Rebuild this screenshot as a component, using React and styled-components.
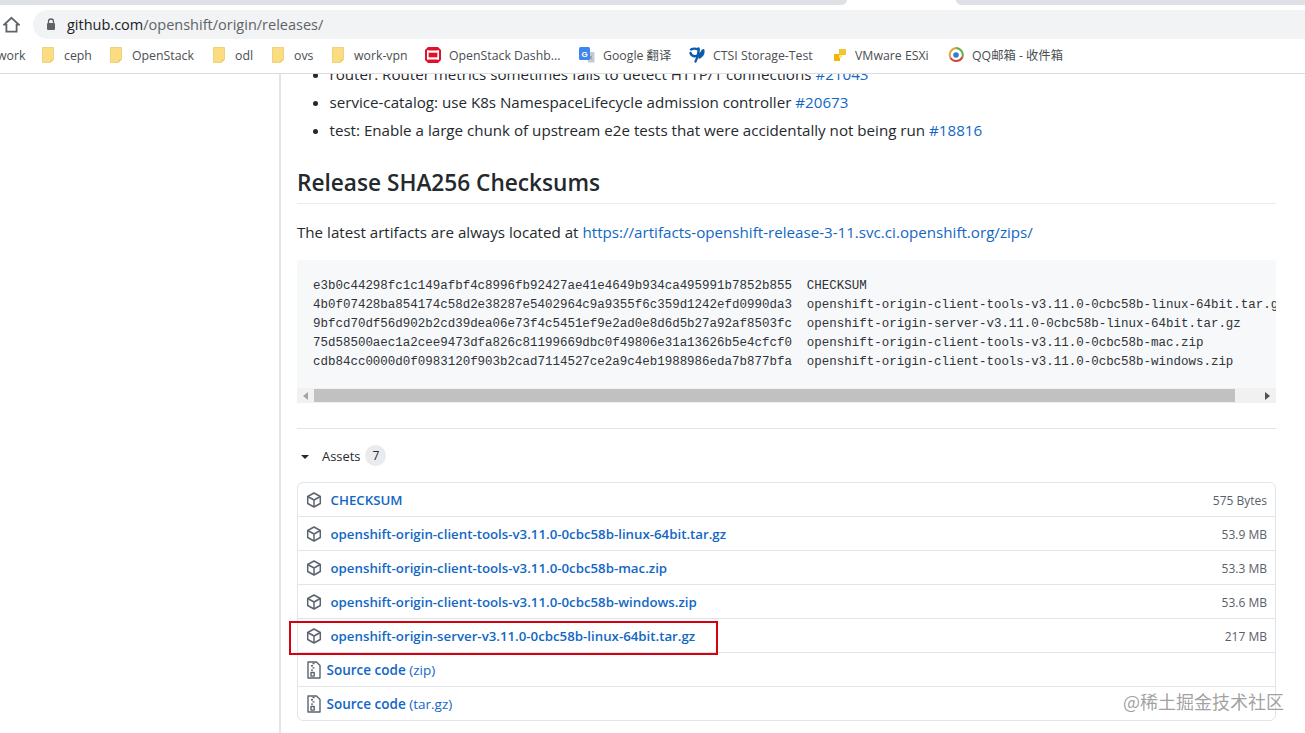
import React from 'react';
import styled, { createGlobalStyle } from 'styled-components';

const UI_FONT = `'Open Sans', 'Noto Sans', 'Noto Sans CJK SC', sans-serif`;
const LINK = '#1267c4';

const bookmarks = [
  { label: 'ceph', icon: 'folder', width: 68 },
  { label: 'OpenStack', icon: 'folder', width: 103 },
  { label: 'odl', icon: 'folder', width: 59 },
  { label: 'ovs', icon: 'folder', width: 60 },
  { label: 'work-vpn', icon: 'folder', width: 93 },
  { label: 'OpenStack Dashb...', icon: 'redhat', width: 154 },
  { label: 'Google 翻译', icon: 'translate', width: 110 },
  { label: 'CTSI Storage-Test', icon: 'ctsi', width: 144 },
  { label: 'VMware ESXi', icon: 'vmware', width: 115 },
  { label: 'QQ邮箱 - 收件箱', icon: 'qq', width: 120 },
];

const checksums = `e3b0c44298fc1c149afbf4c8996fb92427ae41e4649b934ca495991b7852b855  CHECKSUM
4b0f07428ba854174c58d2e38287e5402964c9a9355f6c359d1242efd0990da3  openshift-origin-client-tools-v3.11.0-0cbc58b-linux-64bit.tar.gz
9bfcd70df56d902b2cd39dea06e73f4c5451ef9e2ad0e8d6d5b27a92af8503fc  openshift-origin-server-v3.11.0-0cbc58b-linux-64bit.tar.gz
75d58500aec1a2cee9473dfa826c81199669dbc0f49806e31a13626b5e4cfcf0  openshift-origin-client-tools-v3.11.0-0cbc58b-mac.zip
cdb84cc0000d0f0983120f903b2cad7114527ce2a9c4eb1988986eda7b877bfa  openshift-origin-client-tools-v3.11.0-0cbc58b-windows.zip`;

const assets = [
  { name: 'CHECKSUM', size: '575 Bytes' },
  { name: 'openshift-origin-client-tools-v3.11.0-0cbc58b-linux-64bit.tar.gz', size: '53.9 MB' },
  { name: 'openshift-origin-client-tools-v3.11.0-0cbc58b-mac.zip', size: '53.3 MB' },
  { name: 'openshift-origin-client-tools-v3.11.0-0cbc58b-windows.zip', size: '53.6 MB' },
  { name: 'openshift-origin-server-v3.11.0-0cbc58b-linux-64bit.tar.gz', size: '217 MB', marked: true },
];

function PackageIcon() {
  return (
    <svg width="16" height="16" viewBox="0 0 16 16" fill="none" stroke="#5c6470" strokeWidth="1.5" strokeLinejoin="round">
      <path d="M8 1l6.300 3.500v7L8 15l-6.300-3.500v-7z" />
      <path d="M1.700 4.500L8 8l6.300-3.500M8 8v7" />
    </svg>
  );
}

function ZipIcon() {
  return (
    <svg width="14" height="18" viewBox="0 0 14 18" fill="none" stroke="#5c6470" strokeWidth="1.400" strokeLinejoin="round">
      <path d="M1 1h8.500L13 4.500V17H1z" />
      <path d="M5.500 2.500H7.500M4 4.700H6M5.500 6.900H7.500M4 9.100H6" />
      <rect x="4" y="11.500" width="3.200" height="3.600" />
    </svg>
  );
}

function BookmarkIcon({ kind }) {
  if (kind === 'folder') {
    return (
      <svg width="12" height="16" viewBox="0 0 12 16">
        <path d="M.5.500h11v12l-3 3H.5z" fill="#fbdc80" stroke="#eed27f" />
        <path d="M8.500 15.500l.5-3h2.500z" fill="#e9c768" />
      </svg>
    );
  }
  if (kind === 'redhat') {
    return (
      <svg width="16" height="16" viewBox="0 0 16 16">
        <path d="M3 0h10l3 3v10l-3 3H3l-3-3V3z" fill="#e0112b" />
        <rect x="2" y="3.500" width="12" height="2.200" fill="#fff" />
        <rect x="2" y="10.300" width="12" height="2.200" fill="#fff" />
        <rect x="2" y="3.500" width="1.600" height="9" fill="#fff" />
        <rect x="12.400" y="3.500" width="1.600" height="9" fill="#fff" />
      </svg>
    );
  }
  if (kind === 'translate') {
    return (
      <svg width="16" height="17" viewBox="0 0 16 17">
        <path d="M7 5h8.500v10.500H9z" fill="#c6ccd4" />
        <path d="M10 8.500l3 4M13 8.500l-3 4" stroke="#7c8590" strokeWidth="1" />
        <rect x="0" y="0" width="11" height="13" rx="1.500" fill="#3f86ee" />
        <text x="2.500" y="9.500" fontSize="8" fontWeight="700" fill="#fff" fontFamily="'Liberation Sans', sans-serif">G</text>
      </svg>
    );
  }
  if (kind === 'ctsi') {
    return (
      <svg width="16" height="16" viewBox="0 0 16 16" fill="none" stroke="#0b5cad" strokeWidth="2.400" strokeLinecap="round">
        <path d="M2 2.500c2.500-1.500 5-1 7.500 0" />
        <path d="M9.500 1.500C10 6 8.500 11 6.500 14.500" />
        <path d="M1.500 6c1 4 6 4 9 1.500 2-1.600 3.500-3.500 3.500-5 1 3-.5 6-3.500 8" />
      </svg>
    );
  }
  if (kind === 'vmware') {
    return (
      <svg width="14" height="14" viewBox="0 0 14 14">
        <rect x="6" y="1" width="7" height="6" fill="#f7c531" />
        <rect x="1" y="6" width="6" height="7" fill="#f2b705" />
        <rect x="6" y="7" width="3" height="3" fill="#fde68f" />
      </svg>
    );
  }
  return (
    <svg width="16" height="16" viewBox="0 0 16 16" fill="none" strokeWidth="2">
      <path d="M2.500 11A7 7 0 0 1 8 1" stroke="#e8a33a" />
      <path d="M8 1a7 7 0 0 1 6.500 9" stroke="#5fae48" />
      <path d="M14.500 10a7 7 0 0 1-12 1" stroke="#d9442f" />
      <circle cx="8" cy="8" r="2.800" fill="#2a7fd8" stroke="none" />
    </svg>
  );
}

function App() {
  return (
    <>
      <GlobalStyle />
      <Browser>
        <TabStrip>
          <BackgroundTab $side="left" />
          <ActiveTab />
          <BackgroundTab $side="right" />
        </TabStrip>
        <Toolbar>
          <HomeButton>
            <svg width="17" height="17" viewBox="0 0 17 17" fill="none" stroke="#5f6368" strokeWidth="1.800" strokeLinejoin="miter">
              <path d="M8.500 1.800L15.800 8.600H13.600V15.700H3.400V8.600H1.200Z" />
            </svg>
          </HomeButton>
          <Omnibox>
            <svg width="10" height="13" viewBox="0 0 10 13">
              <path d="M2.500 5V3.500a2.500 2.500 0 0 1 5 0V5" fill="none" stroke="#5f6368" strokeWidth="1.300" />
              <rect x="1" y="5" width="8" height="7" rx="1" fill="#5f6368" />
            </svg>
            <UrlText>
              <strong>github.com</strong>/openshift/origin/releases/
            </UrlText>
          </Omnibox>
        </Toolbar>
        <BookmarkBar>
          <WorkLabel>work</WorkLabel>
          {bookmarks.map((b) => (
            <Bookmark key={b.label} $width={b.width} $gap={b.icon === 'folder' ? 10 : 8}>
              <BookmarkIcon kind={b.icon} />
              <span>{b.label}</span>
            </Bookmark>
          ))}
        </BookmarkBar>
      </Browser>

      <Page>
        <Sidebar />
        <Main>
          <ReleaseNotes>
            <li>
              router: Router metrics sometimes fails to detect HTTP/1 connections <IssueLink>#21043</IssueLink>
            </li>
            <li>
              service-catalog: use K8s NamespaceLifecycle admission controller <IssueLink>#20673</IssueLink>
            </li>
            <li>
              test: Enable a large chunk of upstream e2e tests that were accidentally not being run{' '}
              <IssueLink>#18816</IssueLink>
            </li>
          </ReleaseNotes>

          <Heading>Release SHA256 Checksums</Heading>
          <Paragraph>
            The latest artifacts are always located at{' '}
            <IssueLink>https://artifacts-openshift-release-3-11.svc.ci.openshift.org/zips/</IssueLink>
          </Paragraph>

          <CodeBlock>
            <Code>{checksums}</Code>
            <ScrollBar>
              <ScrollArrow $side="left" />
              <ScrollTrack>
                <ScrollThumb />
              </ScrollTrack>
              <ScrollArrow $side="right" />
            </ScrollBar>
          </CodeBlock>

          <Divider />

          <AssetsTitle>
            <Caret />
            <span>Assets</span>
            <Counter>7</Counter>
          </AssetsTitle>

          <AssetList>
            {assets.map((a) => (
              <AssetRow key={a.name}>
                <AssetName>
                  <PackageIcon />
                  <AssetLink>{a.name}</AssetLink>
                </AssetName>
                <AssetSize>{a.size}</AssetSize>
                {a.marked && <Highlight />}
              </AssetRow>
            ))}
            <AssetRow>
              <SourceName>
                <ZipIcon />
                <SourceLink>
                  Source code <span>(zip)</span>
                </SourceLink>
              </SourceName>
            </AssetRow>
            <AssetRow>
              <SourceName>
                <ZipIcon />
                <SourceLink>
                  Source code <span>(tar.gz)</span>
                </SourceLink>
              </SourceName>
            </AssetRow>
          </AssetList>
        </Main>
      </Page>
      <Watermark>@稀土掘金技术社区</Watermark>
    </>
  );
}

const GlobalStyle = createGlobalStyle`
  html, body {
    margin: 0;
    height: 733px;
    overflow: hidden;
    background: #fff;
  }
  body {
    font-family: ${UI_FONT};
    color: #24292e;
  }
`;

const Browser = styled.header`
  display: flex;
  flex-direction: column;
  height: 74px;
  border-bottom: 1px solid #dadce0;
  box-sizing: border-box;
`;

const TabStrip = styled.div`
  height: 5px;
  display: flex;
  flex: none;
`;

const BackgroundTab = styled.div`
  background: #dee1e6;
  ${(p) =>
    p.$side === 'left'
      ? 'width: 847px; border-bottom-right-radius: 5px;'
      : 'flex: 1; border-bottom-left-radius: 5px;'}
`;

const ActiveTab = styled.div`
  width: 109px;
  background: #fff;
`;

const Toolbar = styled.div`
  height: 34px;
  display: flex;
  align-items: flex-end;
  flex: none;
`;

const HomeButton = styled.div`
  width: 33px;
  height: 29px;
  padding: 0 0 0 3px;
  box-sizing: border-box;
  display: flex;
  align-items: center;
`;

const Omnibox = styled.div`
  flex: 1;
  height: 29px;
  background: #f1f3f4;
  border-radius: 14.500px 0 0 14.500px;
  display: flex;
  align-items: center;
  gap: 11px;
  padding-left: 13px;
`;

const UrlText = styled.div`
  font-size: 14.500px;
  color: #5f6368;
  strong {
    color: #202124;
    font-weight: 400;
  }
`;

const BookmarkBar = styled.nav`
  flex: 1;
  display: flex;
  align-items: center;
  padding-bottom: 2px;
  font-size: 12.300px;
  color: #4a4e52;
  white-space: nowrap;
`;

const WorkLabel = styled.span`
  width: 44px;
  margin-left: -3px;
  flex: none;
`;

const Bookmark = styled.div`
  width: ${(p) => p.$width}px;
  flex: none;
  display: flex;
  align-items: center;
  gap: ${(p) => p.$gap}px;
  &:first-of-type {
    margin-left: 1px;
  }
`;

const Page = styled.div`
  display: flex;
  height: 659px;
  overflow: hidden;
`;

const Sidebar = styled.aside`
  width: 279px;
  flex: none;
  border-right: 2px solid #e1e4e8;
`;

const Main = styled.main`
  width: 979px;
  margin-left: 16px;
  flex: none;
`;

const ReleaseNotes = styled.ul`
  margin: -14px 0 0;
  padding: 0 0 0 32.500px;
  font-size: 15.150px;
  line-height: 28px;
`;

const IssueLink = styled.a`
  color: ${LINK};
`;

const Heading = styled.h2`
  margin: 23px 0 16px;
  padding-bottom: 5px;
  border-bottom: 1px solid #eaecef;
  font-size: 22.650px;
  line-height: 31px;
  font-weight: 600;
`;

const Paragraph = styled.p`
  margin: 0 0 16px;
  font-size: 15.150px;
  line-height: 24px;
`;

const CodeBlock = styled.div`
  background: #f6f8fa;
  border-radius: 3px 3px 0 0;
  width: 979px;
  overflow: hidden;
`;

const Code = styled.pre`
  margin: 0;
  padding: 17px 16px 15px;
  height: 96px;
  overflow: hidden;
  box-sizing: content-box;
  font-family: 'Liberation Mono', monospace;
  font-size: 12.470px;
  line-height: 19px;
  color: #2f3338;
`;

const ScrollBar = styled.div`
  display: flex;
  height: 15px;
  background: #f1f1f1;
`;

const ScrollArrow = styled.div`
  width: 17px;
  flex: none;
  display: flex;
  align-items: center;
  justify-content: center;
  &::before {
    content: '';
    border-top: 4px solid transparent;
    border-bottom: 4px solid transparent;
    ${(p) => (p.$side === 'left' ? 'border-right: 5px solid #a3a3a3;' : 'border-left: 5px solid #505050;')}
  }
`;

const ScrollTrack = styled.div`
  flex: 1;
`;

const ScrollThumb = styled.div`
  width: 921px;
  height: 13px;
  margin-top: 1px;
  background: #c1c1c1;
`;

const Divider = styled.hr`
  margin: 25px 0 0;
  border: 0;
  border-top: 1px solid #e1e4e8;
`;

const AssetsTitle = styled.div`
  display: flex;
  align-items: center;
  height: 21px;
  margin: 16px 0 16px;
  font-size: 12.900px;
  font-weight: 400;
`;

const Caret = styled.i`
  width: 0;
  height: 0;
  margin: 2px 13px 0 4px;
  border-top: 4px solid #24292e;
  border-left: 4px solid transparent;
  border-right: 4px solid transparent;
`;

const Counter = styled.span`
  width: 21px;
  height: 21px;
  margin-left: 5px;
  border-radius: 50%;
  background: #e9ebee;
  display: flex;
  align-items: center;
  justify-content: center;
  font-size: 12px;
`;

const AssetList = styled.div`
  border: 1px solid #e1e4e8;
  border-radius: 6px;
`;

const AssetRow = styled.div`
  position: relative;
  height: 34px;
  display: flex;
  align-items: center;
  justify-content: space-between;
  padding: 0 8px;
  box-sizing: border-box;
  & + & {
    border-top: 1px solid #e1e4e8;
  }
  &:first-child {
    height: 33px;
  }
`;

const AssetName = styled.div`
  display: flex;
  align-items: center;
  gap: 8.500px;
  min-width: 0;
`;

const SourceName = styled.div`
  display: flex;
  align-items: center;
  gap: 5.500px;
  margin-left: 1px;
`;

const AssetLink = styled.a`
  color: ${LINK};
  font-size: 13.270px;
  font-weight: 600;
`;

const SourceLink = styled.a`
  color: ${LINK};
  font-size: 13.500px;
  font-weight: 600;
  span {
    font-weight: 400;
  }
`;

const AssetSize = styled.small`
  font-size: 12px;
  line-height: 17px;
  padding-top: 1px;
  color: #586069;
`;

const Highlight = styled.div`
  position: absolute;
  z-index: 1;
  left: -9px;
  top: 2px;
  width: 429px;
  height: 34px;
  border: 2px solid #d7000f;
  box-sizing: border-box;
  pointer-events: none;
`;

const Watermark = styled.div`
  position: absolute;
  left: 1123px;
  top: 690px;
  font-family: 'Noto Sans CJK SC', sans-serif;
  font-size: 18px;
  line-height: 22px;
  color: rgba(120, 120, 120, 0.7);
  white-space: nowrap;
`;

export default App;
